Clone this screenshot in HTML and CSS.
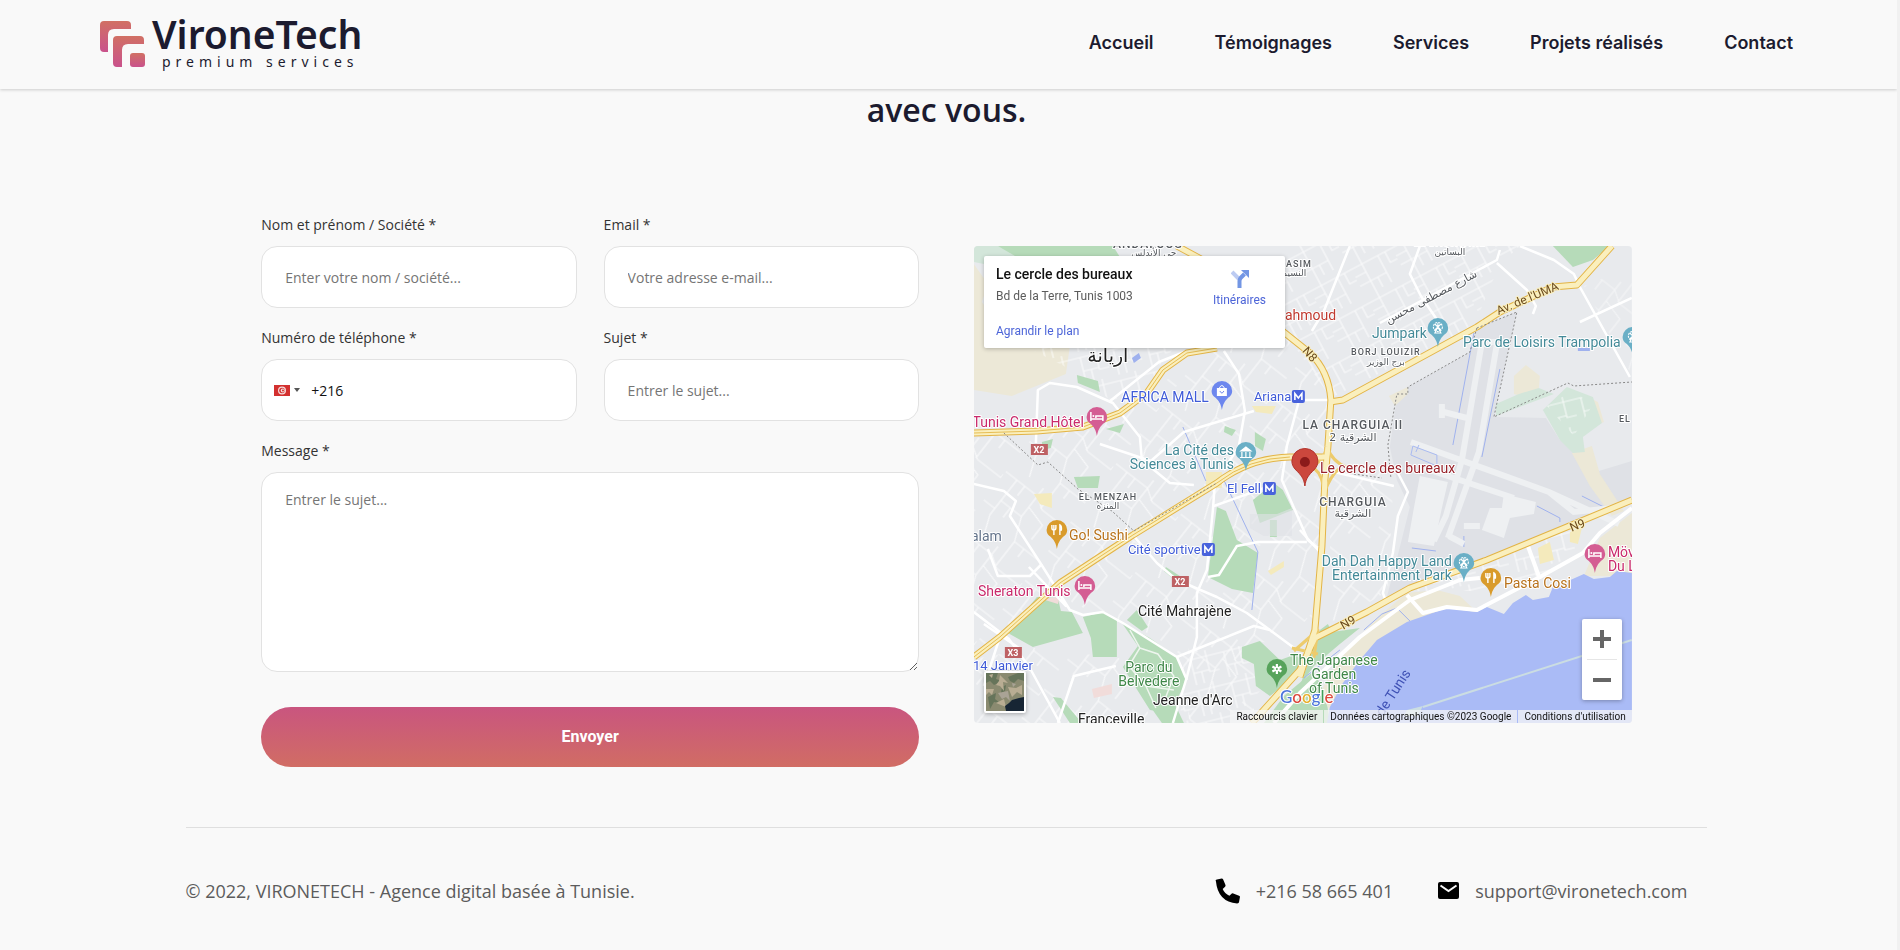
FILE: index.html
```html
<!DOCTYPE html>
<html lang="fr">
<head>
<meta charset="utf-8">
<meta name="viewport" content="width=device-width, initial-scale=1">
<title>VironeTech</title>
<link rel="stylesheet" href="styles.css">
</head>
<body>
<header class="header">
  <a class="logo" href="#accueil">
    <svg class="logo-mark" viewBox="0 0 45 47" aria-hidden="true">
      <defs><linearGradient id="brand" x1="0" y1="0" x2="0" y2="1"><stop offset="0" stop-color="#d17064"/><stop offset="1" stop-color="#c9528c"/></linearGradient></defs>
      <path fill="url(#brand)" d="M4 0H27Q31 0 31 4V8H14Q8 8 8 14V31H4Q0 31 0 27V4Q0 0 4 0Z"/>
      <path fill="url(#brand)" d="M17 15H40Q44 15 44 19V23H28Q22 23 22 29V46H17Q13 46 13 42V19Q13 15 17 15Z"/>
      <rect fill="url(#brand)" x="30" y="32" width="15" height="14" rx="3"/>
    </svg>
    <span class="logo-text"><span class="logo-name">VironeTech</span><span class="logo-tag">premium services</span></span>
  </a>
  <nav class="nav">
    <a href="#accueil">Accueil</a><a href="#temoignages">Témoignages</a><a href="#services">Services</a><a href="#projets">Projets réalisés</a><a href="#contact">Contact</a>
  </nav>
</header>
<main class="main">
  <h2 class="title">avec vous.</h2>
  <div class="contact">
    <form class="form">
      <div class="field"><label for="nom">Nom et prénom / Société *</label><input id="nom" type="text" placeholder="Enter votre nom / société..."></div>
      <div class="field"><label for="email">Email *</label><input id="email" type="email" placeholder="Votre adresse e-mail..."></div>
      <div class="field"><label for="tel">Numéro de téléphone *</label>
        <div class="phone">
          <button class="country" type="button" aria-label="Tunisie">
            <svg width="16" height="11" viewBox="0 0 16 11"><path fill="#d3302f" d="M0 0H16V11H0Z"/><circle cx="8" cy="5.500" r="4" fill="#f6dcdc"/><circle cx="8" cy="5.500" r="2.800" fill="#d3302f"/><circle cx="8.700" cy="5.500" r="2" fill="#f6dcdc"/><circle cx="9" cy="5.500" r="1" fill="#d3302f"/></svg>
            <svg width="6" height="4" viewBox="0 0 6 4"><path fill="#555" d="M0 0H6L3 4Z"/></svg>
          </button>
          <input id="tel" type="tel" value="+216">
        </div>
      </div>
      <div class="field"><label for="sujet">Sujet *</label><input id="sujet" type="text" placeholder="Entrer le sujet..."></div>
      <div class="field wide"><label for="message">Message *</label><textarea id="message" placeholder="Entrer le sujet..."></textarea></div>
      <button class="send" type="submit">Envoyer</button>
    </form>
    <section class="map" aria-label="Plan">
      <svg class="map-canvas" viewBox="0 0 658 477" preserveAspectRatio="xMidYMid slice">
        <defs>
          <pattern id="st1" width="46" height="38" patternUnits="userSpaceOnUse" patternTransform="rotate(-28)"><path class="st" d="M0 8H46M0 27H30M12 0V38M30 8V38M38 8V20H46M0 17H12M20 27V38"/></pattern>
          <pattern id="st2" width="82" height="74" patternUnits="userSpaceOnUse" patternTransform="rotate(38)"><path class="st" d="M0 10H40L52 18H82V14M14 10V54L22 74M40 0V36L50 60V74M14 36H40M40 24L62 30V48M26 36V48M0 46H14M50 0V18M24 10V22M50 60H82M62 60V70"/></pattern>
          <pattern id="st3" width="34" height="32" patternUnits="userSpaceOnUse" patternTransform="rotate(-14)"><path class="st" d="M0 6H34M8 6V32M24 0V22H34M8 20H24M16 20V32"/></pattern>
          <path id="pin" d="M0 29C-1 23-3 20-6 17C-9 15-10.300 13-10.300 10A10.300 10 0 0 1 10.300 10C10.300 13 9 15 6 17C3 20 1 23 0 29Z"/>
          <g id="bed" fill="none" stroke="#fff" stroke-width="1.500"><path d="M-6 5V14M-6 12H6V14M6 12V9H-1V11"/><circle cx="-3.500" cy="9" r="1" fill="#fff" stroke="none"/></g>
          <g id="fork" fill="none" stroke="#fff" stroke-width="1.400"><path d="M-5 5V8Q-5 10-3 10Q-1 10-1 8V5M-3 5V15M3 15V5Q5 6 4.500 10H3"/></g>
          <g id="wheel" fill="none" stroke="#fff" stroke-width="1.100"><circle cy="9" r="4.500" stroke-dasharray="2 1"/><path d="M-3 6L3 12M3 6L-3 12M0 5V9L-3 15H3L0 9"/></g>
          <g id="metro"><rect width="13" height="13" rx="2" fill="#4862dc"/><path d="M3 10V3.500L6.500 8L10 3.500V10" fill="none" stroke="#fff" stroke-width="1.600"/></g>
        </defs>
        <rect width="658" height="477" fill="#e8eaed"/>
        <g fill="#ece8d7"><path d="M0 18L14 38L8 56L38 98L96 100L92 128L38 150L0 144Z"/></g>
        <path fill="#d3e6da" d="M0 0H24L46 10L10 18L0 16Z"/>
        <path fill="#dfe1e6" d="M503 82L543 66L520 171L594 137L658 136V252L593 280L513 313L436 341L413 351L426 301L436 261L423 234L416 201L423 151L434 141L496 106Z"/>
        <path fill="#e8eaed" d="M520 171L594 137L658 136V215L625 225L612 206L586 194L572 172Z"/>
        <g fill="#ece8d7"><path d="M540 130L552 119L566 130L565 142L552 151L540 148Z"/><path d="M415 150L434 141L434 148L421 160Z"/><path d="M598 207L618 200L626 228L650 265L638 270L616 240Z"/><path d="M612 150L624 156L630 176L612 184Z"/></g>
        <g fill="#d3e6da"><path d="M545 148L565 142L580 148L522 170L522 158Z"/><path d="M569 164L593 141L619 151L628 177L609 191L611 206L599 207L586 194Z"/></g>
        <g opacity=".75"><path fill="url(#st1)" d="M300 0H546L525 20L500 80L424 118L357 152L311 87Z"/><path fill="url(#st2)" d="M0 188L110 182L170 148L243 102L311 90L354 140V210L240 240L86 337L0 411Z"/><path fill="url(#st3)" d="M50 100H200L180 140L150 164L90 120Z"/><path fill="url(#st2)" d="M86 337L159 289L243 237L350 214V300L341 384L320 400L280 395V477H215L212 430L176 388L100 360Z"/><path fill="url(#st3)" d="M215 400L268 400L290 440L260 477H205ZM430 345L513 315L600 280L608 305L565 330L500 345Z"/><path fill="url(#st2)" d="M0 413L60 402L145 412L176 470V477H0Z"/><path fill="url(#st2)" d="M356 220L420 225L414 345L356 380Z"/><path fill="url(#st2)" d="M610 40L658 20V130Z" opacity=".7"/><path fill="url(#st3)" d="M573 160L600 144L618 160L600 190Z"/></g>
        <g fill="#b6dbb9">
          <path d="M24 0H139L148 14H48Z"/><path d="M579 0H636L619 14L599 21Z"/><path d="M103 129L124 135L126 146L104 137Z"/><path d="M243 261L252 265L263 294L284 307L279 347L258 343L234 331Z"/>
          <path d="M34 387L63 351L84 352L87 365L98 366L109 387L59 401Z"/><path d="M109 371L130 366L143 374V411H119L117 392Z"/><path d="M148 377L176 392L203 411L213 434L196 467L176 464L159 437L149 421L164 400Z"/><path d="M153 374L163 364L174 381L168 385Z"/>
          <path d="M268 401L286 395L306 414L323 408L330 424L296 450L282 440L280 418L268 412Z"/><path d="M279 254L300 237L309 244L319 264L286 277Z"/><path d="M296 274H303V291H296Z"/><path d="M79 451L87 452L108 477H96Z"/><path d="M176 460L200 456L210 477H188Z"/><path d="M281 186L292 193L289 205L281 200Z"/><path d="M100 231L126 230L124 242L104 242Z"/><path d="M68 196L79 193L77 202L69 204Z"/><path d="M132 183L150 178L146 187Z"/><path d="M192 321L206 330L203 336L190 325Z"/><path d="M251 180L262 184L258 190L250 186Z"/><path d="M346 384L354 378L358 386L386 382L366 398L340 420L326 440Z"/><path d="M310 450L340 425L352 450L356 477H290Z"/>
        </g>
        <path fill="#dfe1e6" d="M276 268L303 268L318 262V290H290L276 282Z" opacity=".6"/>
        <g fill="none" stroke="#eef5ee" stroke-width="1.500"><path d="M156 384L166 402L155 420L172 440L182 462M166 402L184 408L200 430L190 456M172 440L200 444"/></g>
        <g fill="#f4eabc"><path d="M60 248L78 247V262L66 258Z"/><path d="M278 160H302L298 168L282 166Z"/><path d="M294 325L310 315V321L297 329Z"/><path d="M564 302L576 296L580 314L566 318Z"/><path d="M596 286L608 282L604 298L596 296Z"/><path d="M232 226H248V242H232Z"/></g>
        <g fill="#f1dcda"><path d="M118 443L138 438V448L120 452Z"/><path d="M68 353L86 351L84 358Z"/></g>
        <path fill="#ece8d7" d="M658 267L626 292L615 318L610 330L658 330ZM433 347L463 344L486 350L503 366L473 366L433 380L403 398L386 418L369 441L356 464L346 447L369 407L409 367Z"/>
        <path fill="#aabbf6" d="M658 327L643 325L636 331L620 333L610 328L592 336L579 341L575 351L559 354L552 349L539 357L530 368L513 361L503 366L473 362L453 369L433 376L403 394L386 414L369 437L356 461L353 477H658Z"/>
        <path fill="none" stroke="#cbdde2" stroke-width="2" d="M449 461L658 394"/>
        <path fill="#cbdde2" d="M433 464L449 460L444 470H430Z"/>
        <g fill="none" stroke="#9fb1ee"><path d="M249 232L284 306L278 364M209 181L232 235M500 87L479 199M526 123L508 211M438 302L462 305M490 290V301M458 292L467 238M608 250L634 263M563 260L586 272V276M390 384L408 368L423 362L436 375M366 404L330 432"/></g>
        <g fill="#9fb1ee"><path d="M158 112L165 107L167 112L160 117Z"/><path d="M187 154L191 149L197 156Z"/><path d="M604 102H616V105H604Z"/></g>
        <path fill="#eef0f2" d="M446 230L474 236L468 262L460 300L434 296L440 262ZM530 248L562 256L560 268L536 272L530 292L508 284L516 262H528Z"/>
        <g fill="none" stroke="#eef0f2" stroke-width="6"><path d="M508 96L488 214L472 270L460 295M523 98L505 206L474 292M508 96H523M437 196L575 246L645 278M450 222L540 252M470 166L493 172M468 158V172M475 290L490 298M490 280H506M575 246L600 266L640 262"/></g>
        <g fill="none" stroke="#a9baf0"><path d="M439 200L463 209V220L437 209ZM445 199L442 206"/></g>
        <g class="white">
          <path d="M546 0L580 14L600 28L606 41L626 77L656 131"/><path d="M523 17L553 44L562 60L559 68"/><path d="M406 77L460 48L523 14L526 4"/><path d="M446 0L436 28L447 50L464 75M376 0L350 65L338 85"/><path d="M606 76L658 52M0 238L30 245L42 255L36 270L69 321L96 364L109 369L129 366L149 377L176 394L203 411L213 434"/><path d="M62 197L64 144L76 137L103 141L139 157L166 191L168 214L196 237L220 239"/><path d="M159 289L183 317L203 334L243 351L273 367L296 384L323 404"/><path d="M241 237L239 264L233 324L223 347V391L213 431L199 477"/><path d="M240 260L296 240M234 331L245 329L263 300L284 296H333"/><path d="M250 105L265 128L271 165L265 200L250 224"/><path d="M325 155L313 200L308 234L334 294L346 304"/><path d="M326 154H357"/><path d="M423 225L434 246L424 270L419 307L409 347L413 358"/><path d="M356 225L420 240M326 284L346 306M14 303L24 330H56L68 318M55 321L92 360L82 340"/><path d="M0 366L35 393L56 422L86 477M26 391L10 440M10 378L45 402M203 411L280 380L296 384"/><path d="M126 198L177 215L210 186L280 165M135 156L185 116L213 105M84 477L100 430L142 420"/>
        </g>
        <g class="white bold"><path d="M658 262L626 287L609 307L566 331L503 364L473 361L449 367L433 349"/><path d="M506 332L486 334L436 354L386 391L326 447L300 477"/><path d="M554 300L566 333"/></g>
        <g class="road-edge"><path d="M0 187L63 185L109 181L146 167L173 147L189 124L213 107L243 102"/><path d="M203 0L229 14L311 87L336 107Q355 125 357 154L354 201L351 234L348 301L341 384L326 431"/><path d="M356 156L369 154L503 81L526 66L579 41L603 39L638 0"/><path d="M658 254L593 281L513 314L436 342L393 366L341 392L326 424L278 477"/><path d="M0 411L26 391L86 337L159 289L243 237Q275 212 316 211H354"/></g>
        <g class="ramp-edge"><path d="M335 222Q350 216 353 200Q358 216 374 222M340 222Q350 230 350 248Q356 230 366 222M318 402L344 408M320 405L344 384L340 412"/></g>
        <g class="road"><path d="M0 187L63 185L109 181L146 167L173 147L189 124L213 107L243 102"/><path d="M203 0L229 14L311 87L336 107Q355 125 357 154L354 201L351 234L348 301L341 384L326 431"/><path d="M356 156L369 154L503 81L526 66L579 41L603 39L638 0"/><path d="M658 254L593 281L513 314L436 342L393 366L341 392L326 424L278 477"/><path d="M0 411L26 391L86 337L159 289L243 237Q275 212 316 211H354"/></g>
        <g class="road-mid"><path d="M0 187L63 185L109 181L146 167L173 147L189 124L213 107L243 102M0 411L26 391L86 337L159 289L243 237Q275 212 316 211"/></g>
        <path class="dots" d="M30 187L64 219L74 216L104 243L138 265L160 285L243 237M503 82L543 66L520 171L594 137L600 140L658 136M503 82L496 106L434 141V148H423L414 199L417 232M380 228L408 232"/>
        <g class="t spaced" text-anchor="middle"><text class="big" x="174" y="2">ANDALOUS</text><text x="325" y="21">ASIM</text><text x="476" y="0">EL BASSATINE</text><text x="412" y="109">BORJ LOUIZIR</text><text x="134" y="254">EL MENZAH</text><text x="651" y="176">EL</text><text class="big" x="379" y="183">LA CHARGUIA II</text><text class="big" x="379" y="260">CHARGUIA</text></g>
        <g class="ar" text-anchor="middle"><text x="180" y="10">حي الأندلس</text><text x="320" y="30">النسيم</text><text x="476" y="9">البساتين</text><text x="412" y="119">برج الوزير</text><text x="134" y="263">المنزه</text><text class="ar-md" x="379" y="195">الشرقية 2</text><text class="ar-md" x="379" y="271">الشرقية</text><text class="ar-md" transform="translate(459 54) rotate(-28)">شارع مصطفى محسن</text><text class="ar-lg" x="134" y="116">اريانة</text></g>
        <g class="t blue"><text x="235" y="156" text-anchor="end">AFRICA MALL</text><text class="sm" x="280" y="155">Ariana</text><text class="sm" x="253" y="247">El Fell</text><text class="sm" x="154" y="308">Cité sportive</text><text class="sm" x="-1" y="424">14 Janvier</text></g>
        <g class="t pink"><text x="110" y="181" text-anchor="end">Tunis Grand Hôtel</text><text x="4" y="350">Sheraton Tunis</text><text x="634" y="311">Möv</text><text x="634" y="325">Du L</text></g>
        <g class="t teal"><text x="260" y="209" text-anchor="end">La Cité des</text><text x="260" y="223" text-anchor="end">Sciences à Tunis</text><text x="398" y="92">Jumpark</text><text x="489" y="101">Parc de Loisirs Trampolia</text><text x="478" y="320" text-anchor="end">Dah Dah Happy Land</text><text x="478" y="334" text-anchor="end">Entertainment Park</text></g>
        <g class="t orange"><text x="95" y="294">Go! Sushi</text><text x="530" y="342">Pasta Cosi</text></g>
        <g class="t green" text-anchor="middle"><text x="175" y="426">Parc du</text><text x="175" y="440">Belvedere</text><text x="360" y="419">The Japanese</text><text x="360" y="433">Garden</text><text x="360" y="447">of Tunis</text></g>
        <g class="t dark"><text x="164" y="370">Cité Mahrajène</text><text x="179" y="459">Jeanne d'Arc</text><text x="104" y="478">Franceville</text></g>
        <g class="t"><text class="red" x="311" y="74">ahmoud</text><text class="maroon" x="346" y="227">Le cercle des bureaux</text><text class="slate" x="-3" y="295">alam</text></g>
        <g class="t roadname" text-anchor="middle"><text transform="translate(333 111) rotate(48)">N8</text><text transform="translate(555 56) rotate(-23)">Av. de l'UMA</text><text transform="translate(605 283) rotate(-22)">N9</text><text transform="translate(376 380) rotate(-30)">N9</text></g>
        <text class="bay" text-anchor="middle" transform="translate(423 449) rotate(-57)">de Tunis</text>
        <g class="shield" text-anchor="middle"><rect x="57" y="198" width="17" height="11"/><text x="65" y="207">X2</text><rect x="198" y="330" width="17" height="11"/><text x="206" y="339">X2</text><rect x="31" y="401" width="17" height="11"/><text x="39" y="410">X3</text></g>
        <use href="#metro" x="318" y="144"/><use href="#metro" x="289" y="236"/><use href="#metro" x="228" y="297"/>
        <g fill="#d45d93"><use href="#pin" x="123" y="161"/><use href="#pin" x="111" y="330"/><use href="#pin" x="621" y="298"/></g><use href="#bed" x="123" y="161"/><use href="#bed" x="111" y="330"/><use href="#bed" x="621" y="298"/>
        <g fill="#6aafc6"><use href="#pin" x="272" y="196"/><use href="#pin" x="464" y="72"/><use href="#pin" x="659" y="81"/><use href="#pin" x="490" y="307"/></g><use href="#wheel" x="464" y="72"/><use href="#wheel" x="659" y="81"/><use href="#wheel" x="490" y="307"/>
        <path d="M267 205L272 201L277 205ZM268 206V211M272 206V211M276 206V211M266 211.500H278" fill="#fff" stroke="#fff" stroke-width="1.200"/>
        <g fill="#d99b2b"><use href="#pin" x="83" y="274"/><use href="#pin" x="517" y="322"/></g><use href="#fork" x="83" y="274"/><use href="#fork" x="517" y="322"/>
        <use href="#pin" x="248" y="135" fill="#6d87ee"/><path d="M243 142H253V150H243Z" fill="#fff"/><path d="M245.500 142Q248 137 250.500 142" fill="none" stroke="#fff"/><path d="M246 145Q248 149 250 145" fill="none" stroke="#6d87ee"/>
        <use href="#pin" x="303" y="413" fill="#57a35b"/><path d="M303 418V428M298.500 420.500L307.500 425.500M307.500 420.500L298.500 425.500" stroke="#fff" stroke-width="2.200"/><circle cx="303" cy="423" r="1" fill="#57a35b"/>
        <path d="M331 240C330 232 327 229 322 224C319 221 318 218 318 215A13 12.500 0 0 1 344 215C344 218 343 221 340 224C335 229 332 232 331 240Z" fill="#cb473d" stroke="#b2332b"/><circle cx="331" cy="216" r="5" fill="#8b1a1a"/>
        <text class="google" x="306" y="457"><tspan fill="#4d76dc">G</tspan><tspan fill="#dc4a3e">o</tspan><tspan fill="#e8b02c">o</tspan><tspan fill="#4d76dc">g</tspan><tspan fill="#3f9e57">l</tspan><tspan fill="#dc4a3e">e</tspan></text>
      </svg>
      <div class="place">
        <div class="place-info"><strong>Le cercle des bureaux</strong><span>Bd de la Terre, Tunis 1003</span><a href="#plan">Agrandir le plan</a></div>
        <a class="directions" href="#itineraires">
          <svg width="18" height="18" viewBox="0 0 18 18" aria-hidden="true"><path d="M1 2L8 9" stroke="#bccbf2" stroke-width="4"/><path d="M8.500 18V11Q8.500 9 10 7.500L13.500 4" fill="none" stroke="#7396e4" stroke-width="4"/><path fill="#7396e4" d="M10 0H18V8Z"/></svg>
          Itinéraires
        </a>
      </div>
      <button class="satellite" type="button" aria-label="Satellite">
        <svg viewBox="0 0 38 38"><rect width="38" height="38" fill="#8a8a70"/><path fill="#66745a" d="M0 0H12L10 6L16 8L8 12L4 8L0 10ZM22 4L32 0H38V8L32 6L28 10L24 8ZM2 24L6 22L10 20L9 26L14 30L8 29L4 36ZM16 14L20 12L19 18L15 20Z"/><path fill="#b9ad93" d="M14 2L22 10L17 9L18 18L14 13L10 12L13 8ZM22 14L30 15L36 12V22L31 19L26 24ZM0 16L8 16L6 22L3 19L0 22ZM10 30L18 26L20 34L15 32ZM3 2L7 1L6 5Z"/><path fill="#a9a395" d="M12 20L22 18L24 28L20 24L16 26ZM26 10L30 11L27 14Z"/><path fill="#172534" d="M38 24L33 25L26 27L23 30L19 33L20 38H38Z"/></svg>
      </button>
      <div class="zoom">
        <button type="button" aria-label="Zoom avant"><svg width="18" height="18" viewBox="0 0 18 18"><path d="M9 0V18M0 9H18" stroke="#666" stroke-width="4"/></svg></button>
        <button type="button" aria-label="Zoom arrière"><svg width="18" height="18" viewBox="0 0 18 18"><path d="M0 9H18" stroke="#666" stroke-width="4"/></svg></button>
      </div>
      <div class="credits"><a href="#clavier">Raccourcis clavier</a><span>Données cartographiques ©2023 Google</span><a href="#conditions">Conditions d'utilisation</a></div>
    </section>
  </div>
  <footer class="footer">
    <p>© 2022, VIRONETECH - Agence digital basée à Tunisie.</p>
    <div class="links">
      <a href="tel:+21658665401"><svg class="ico-phone" viewBox="0 0 26 26" aria-hidden="true"><path d="M1 3Q0 1 2 1L7 0Q8 0 8.500 1L11 7Q11 8 10.500 8.500L8 11Q10 16 15 18L17.500 15.500Q18 15 19 15.500L25 18Q26 18.500 26 19L25 24.500Q25 26 23 26Q3 24 1 3Z"/></svg>+216 58 665 401</a>
      <a href="mailto:support@vironetech.com"><svg class="ico-mail" viewBox="0 0 21 17" aria-hidden="true"><rect width="21" height="17" rx="2"/><path d="M2.500 3.500L10.500 9L18.500 3.500" fill="none" stroke="#f9f9f9" stroke-width="2"/></svg>support@vironetech.com</a>
    </div>
  </footer>
</main>
</body>
</html>
```

FILE: styles.css
```css
*{box-sizing:border-box}
body{margin:0;background:#f9f9f9;color:#1c1b2f;font-family:"Open Sans","Noto Sans",sans-serif;border-right:3px solid #f1f1f1}
a{color:inherit;text-decoration:none}
svg{display:block}
button,input,textarea{font:inherit;margin:0}
.header{position:sticky;top:0;z-index:5;display:flex;align-items:center;justify-content:space-between;height:89px;padding:0 104px 0 100px;background:#f9f9f9;box-shadow:0 1px 3px rgba(0,0,0,.18)}
.logo{display:flex;align-items:center;gap:7px}
.logo-mark{width:45px;height:47px}
.logo-text{display:flex;flex-direction:column;padding-bottom:4px}
.logo-name{font:600 39px/36px "Noto Sans",sans-serif}
.logo-tag{margin-top:2px;padding-left:10px;font:400 14px/16px "Noto Sans",sans-serif;letter-spacing:5px}
.nav{display:flex;gap:61px;padding-bottom:3px;font:600 18px/24px Inter,sans-serif}
.main{padding:3px 4px 0 0}
.title{margin:0 0 86px;font-size:32px;line-height:36px;font-weight:600;text-align:center}
.contact{display:grid;grid-template-columns:1fr 1fr;gap:55px;width:72.400%;margin:0 auto;align-items:start}
.form{display:grid;grid-template-columns:1fr 1fr;column-gap:27px;row-gap:19px}
.field{display:flex;flex-direction:column;gap:10px}
.wide,.send{grid-column:1/-1}
.field label{font-size:14px;line-height:22px;color:#333}
.field input,.field textarea{width:100%;height:62px;padding:0 23px;border:1px solid #e2e2e2;border-radius:16px;background:#fff;font-size:14px;color:#111;outline:0}
.field textarea{height:200px;padding:16px 23px;line-height:22px;resize:vertical}
.field ::placeholder{color:#757575;opacity:1}
.phone{position:relative}
.phone .country+input{padding-left:49px}
.country{position:absolute;top:0;bottom:0;left:13px;display:flex;align-items:center;gap:4px;padding:0;border:0;background:none}
.send{height:60px;margin-top:16px;border:0;border-radius:30px;background:linear-gradient(#c9557f,#d16d64);color:#fff;font:700 16px/24px Roboto,sans-serif}
.map{position:relative;height:477px;margin-top:32px;border-radius:4px;overflow:hidden;font-family:Roboto,sans-serif}
.map-canvas{width:100%;height:100%}
.st{fill:none;stroke:#fff;stroke-width:1.2}
.white{fill:none;stroke:#fff;stroke-width:2.5;stroke-linejoin:round}
.bold{stroke-width:4}
.road-edge,.road,.road-mid,.ramp-edge{fill:none;stroke-linejoin:round}
.road-edge{stroke:#e3b445;stroke-width:7}
.ramp-edge{stroke:#edcb6c;stroke-width:3}
.road{stroke:#faefbd;stroke-width:5}
.road-mid{stroke:#e6bd55;stroke-width:1}
.dots{fill:none;stroke:#888;stroke-dasharray:2 2}
.t{font:400 14px Roboto,sans-serif;paint-order:stroke;stroke:#fff;stroke-width:2px;stroke-linejoin:round}
.t .sm{font-size:13px}
.spaced{font-size:9px;font-weight:500;letter-spacing:1px;fill:#55595e}
.spaced .big{font-size:12px}
.ar{font:400 9px "DejaVu Sans",sans-serif;fill:#55595e;paint-order:stroke;stroke:#fff;stroke-width:2px}
.ar .ar-md{font-size:11px}
.ar .ar-lg{font-size:19px;fill:#222}
.blue{fill:#3f5bd8}
.pink{fill:#c92a6b}
.teal{fill:#448a98}
.orange{fill:#b8721c}
.green{fill:#3f8748}
.dark{fill:#222}
.red{fill:#c0392f}
.maroon{fill:#98222a}
.slate{fill:#64748b}
.roadname{font-size:12px;fill:#6b4a1c;stroke:#faefbd}
.bay{font:400 14px Roboto,sans-serif;fill:#3f51b5}
.shield{font:700 9px Roboto,sans-serif;fill:#fff}
.shield rect{fill:#be6164}
.google{font:500 17px Lato,sans-serif;paint-order:stroke;stroke:#fff;stroke-width:2px}
.place{position:absolute;top:10px;left:10px;display:flex;justify-content:space-between;width:301px;height:92px;padding:8px 19px 9px 12px;background:#fff;border-radius:2px;box-shadow:0 1px 4px rgba(0,0,0,.25);font-size:12px;line-height:16px;color:#5b5b5b}
.place-info{display:flex;flex-direction:column}
.place-info strong{font-size:14px;line-height:20px;font-weight:500;color:#111}
.place-info span{margin-top:4px}
.place a{color:#4d65d8}
.place-info a{margin-top:19px}
.directions{display:flex;flex-direction:column;align-items:center;gap:4px;padding-top:6px}
.satellite{position:absolute;left:10px;bottom:10px;width:42px;height:42px;padding:0;border:2px solid #fff;border-radius:2px;box-shadow:0 1px 4px rgba(0,0,0,.3);overflow:hidden}
.zoom{position:absolute;right:10px;bottom:23px;display:flex;flex-direction:column;width:40px;padding:0 5px;background:#fff;border-radius:2px;box-shadow:0 1px 4px rgba(0,0,0,.3)}
.zoom button{display:grid;place-items:center;height:40px;padding:0;border:0;background:none}
.zoom button+button{height:41px;border-top:1px solid #e6e6e6}
.credits{position:absolute;right:0;bottom:0;display:flex;font:400 10px/13px Roboto,sans-serif;color:#111}
.credits>*{padding:0 6px;background:rgba(245,245,245,.75)}
.credits>*+*{margin-left:1px}
.footer{display:flex;align-items:center;justify-content:space-between;width:80.400%;height:123px;margin:60px auto 0;padding:3px 20px 0 0;border-top:1px solid #dfdfdf;font-size:18px;line-height:24px;color:#5c5c5c}
.footer p{margin:0}
.links{display:flex;gap:45px}
.links a{display:flex;align-items:center;gap:16px}
.ico-phone{width:25px;height:26px}
.ico-mail{width:21px;height:17px}
```
